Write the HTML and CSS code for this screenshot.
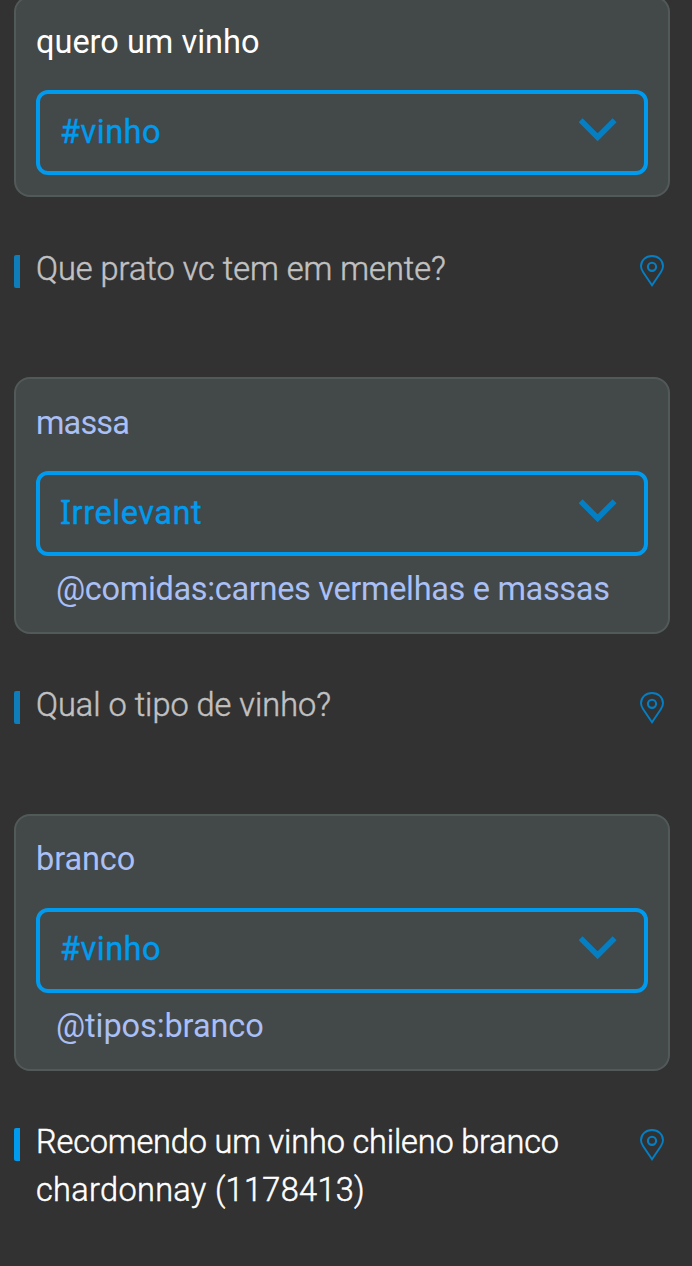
FILE: index.html
```html
<!DOCTYPE html>
<html lang="pt-BR">
<head>
<meta charset="utf-8">
<title>Chat</title>
<link rel="stylesheet" href="styles.css">
</head>
<body>
<svg class="defs" width="0" height="0">
  <symbol id="chevron" viewBox="0 0 38 24"><path d="M1.6 2.2 18.6 19.2 35.6 2.2" fill="none" stroke="currentColor" stroke-width="5.6"/></symbol>
  <symbol id="pin" viewBox="0 0 24 32"><path d="M12 30.3 3.2 17.2C1.8 15.1 1 13.1 1 11.2 1 5.3 5.8 1 12 1s11 4.3 11 10.2c0 1.9-.8 3.9-2.2 6Z" fill="none" stroke="currentColor" stroke-width="1.9"/><circle cx="12" cy="11.8" r="4.1" fill="none" stroke="currentColor" stroke-width="2.1"/></symbol>
</svg>
<main class="chat">
  <section class="card">
    <p class="said latest"><span class="t-quero">quero um vinho</span></p>
    <div class="select"><span class="t-intent">#vinho</span><svg class="chevron"><use href="#chevron"/></svg></div>
  </section>
  <section class="reply first muted">
    <i class="bar"></i><p class="answer"><span class="t-prato">Que prato vc tem em mente?</span></p><svg class="pin"><use href="#pin"/></svg>
  </section>
  <section class="card">
    <p class="said"><span class="t-massa">massa</span></p>
    <div class="select"><span class="t-irrelevant"><span class="slab">I</span>rrelevant</span><svg class="chevron"><use href="#chevron"/></svg></div>
    <p class="entity"><span class="t-comidas">@comidas:carnes vermelhas e massas</span></p>
  </section>
  <section class="reply muted">
    <i class="bar"></i><p class="answer"><span class="t-tipo">Qual o tipo de vinho?</span></p><svg class="pin"><use href="#pin"/></svg>
  </section>
  <section class="card last">
    <p class="said"><span class="t-branco">branco</span></p>
    <div class="select"><span class="t-intent">#vinho</span><svg class="chevron"><use href="#chevron"/></svg></div>
    <p class="entity"><span class="t-tipos">@tipos:branco</span></p>
  </section>
  <section class="reply">
    <i class="bar"></i><p class="answer"><span class="t-rec">Recomendo um vinho chileno branco</span><br><span class="t-chard">chardonnay (1178413)</span></p><svg class="pin"><use href="#pin"/></svg>
  </section>
</main>
</body>
</html>
```
FILE: styles.css
```css
* { box-sizing: border-box; }
html { background: #323232; overflow: hidden; }
body {
  margin: 0;
  height: 1266px;
  overflow: hidden;
  background: #323232;
  font: 400 32.5px/48px Roboto, "Liberation Sans", sans-serif;
}
p { margin: 0; white-space: nowrap; }
.defs { display: block; }
.chat { margin-top: -4px; padding: 0 22px 0 14px; }
.card {
  padding: 20px 20px 19px;
  border: 2px solid #525a59;
  border-radius: 16px;
  background: #434848;
}
.said { color: #a9bff5; }
.latest { color: #fff; }
.select {
  display: flex;
  align-items: center;
  justify-content: space-between;
  height: 85px;
  margin-top: 24px;
  padding: 0 27px 2px 20px;
  border: 4px solid #009bef;
  border-radius: 12px;
  color: #009bef;
  -webkit-text-stroke: .35px currentColor;
}
.chevron { width: 38px; height: 24px; margin-top: -3px; color: #047fc4; }
.entity { margin-top: 9px; padding-left: 20px; color: #a9bff5; }
.card:first-child { padding-bottom: 20px; }
.last { padding-top: 19px; }
.last .select { margin-top: 25px; padding-bottom: 4px; }
.last .chevron { margin-top: -1px; }
.reply {
  display: flex;
  align-items: flex-start;
  margin: 47px 0 85px;
  color: #fff;
}
.reply.first { margin: 48px 0 84px; }
.bar {
  width: 6px;
  height: 33px;
  margin-top: 10px;
  border-radius: 2px 0 0 2px;
  background: #009bef;
}
.answer {
  flex: 1;
  padding-left: 16px;
  font-weight: 300;
  -webkit-text-stroke: .5px currentColor;
}
.pin { width: 24px; height: 32px; margin: 11px 6px 0 0; color: #047fc4; }
.first .pin { margin-top: 10px; }
.muted { color: #c1c1c1; }
.muted .bar { background: #0f7dba; }
.slab { font-family: "Noto Sans", sans-serif; }

/* Tracking per phrase */
.t-intent { letter-spacing: .5px; }
.t-irrelevant { letter-spacing: .55px; }
.t-massa { letter-spacing: -.9px; }
.t-comidas { letter-spacing: -.33px; }
.t-branco, .t-tipos { letter-spacing: -.1px; }
.t-rec { letter-spacing: -.16px; }
.t-chard { letter-spacing: .33px; }
```
